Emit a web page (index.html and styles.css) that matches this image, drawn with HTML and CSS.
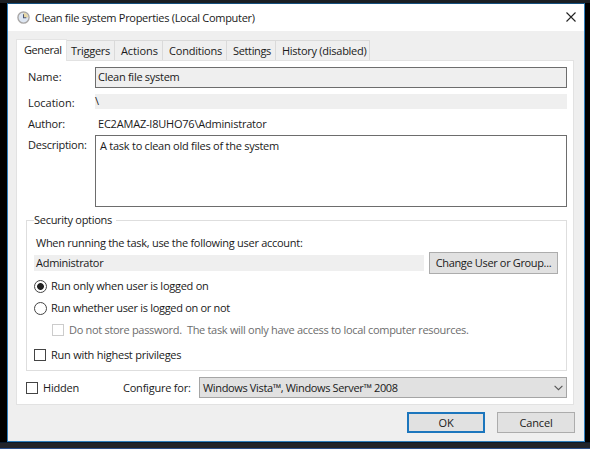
FILE: index.html
```html
<!DOCTYPE html>
<html lang="en">
<head>
<meta charset="utf-8">
<title>Clean file system Properties (Local Computer)</title>
<link rel="stylesheet" href="styles.css">
</head>
<body>
<div class="desktop">
<main class="dialog">
  <header class="titlebar">
    <svg class="clock" viewBox="0 0 14 14"><circle cx="7" cy="7" r="6" fill="#dde6f2" stroke="#a9a7a6" stroke-width="1.5"/><path d="M7 7V2A5 5 0 0 1 12 7Z" fill="#e6d7a6"/><path d="M7 3.4V7.3H10" fill="none" stroke="#4c5672" stroke-width="1.1"/></svg>
    <h1 class="title">Clean file system Properties (Local Computer)</h1>
    <svg class="close" viewBox="0 0 10 10"><path d="M.5.5 9.5 9.5M9.5.5.5 9.5" fill="none" stroke="#222" stroke-width="1.1"/></svg>
  </header>
  <nav class="tabs">
    <span class="tab active">General</span>
    <span class="tab triggers">Triggers</span>
    <span class="tab actions">Actions</span>
    <span class="tab conditions">Conditions</span>
    <span class="tab settings">Settings</span>
    <span class="tab history">History (disabled)</span>
  </nav>
  <section class="panel">
    <div class="row name"><span class="label">Name:</span><div class="field input">Clean file system</div></div>
    <div class="row location"><span class="label">Location:</span><div class="field readonly">\</div></div>
    <div class="row author"><span class="label">Author:</span><div class="field plain">EC2AMAZ-I8UHO76\Administrator</div></div>
    <div class="row description"><span class="label">Description:</span><div class="field textarea">A task to clean old files of the system</div></div>
    <div class="group">
      <div class="legend"><span>Security options</span></div>
      <p class="prompt">When running the task, use the following user account:</p>
      <div class="account"><div class="user">Administrator</div><div class="button change">Change User or Group...</div></div>
      <div class="option only"><i class="radio checked"></i><span>Run only when user is logged on</span></div>
      <div class="option whether"><i class="radio"></i><span>Run whether user is logged on or not</span></div>
      <div class="option store"><i class="check"></i><span>Do not store password.&nbsp; The task will only have access to local computer resources.</span></div>
      <div class="option highest"><i class="check"></i><span>Run with highest privileges</span></div>
    </div>
    <div class="bottom">
      <div class="option hide"><i class="check"></i><span>Hidden</span></div>
      <span class="configure">Configure for:</span>
      <div class="select"><span>Windows Vista™, Windows Server™ 2008</span><svg class="chevron" viewBox="0 0 9 6"><path d="M.6.8 4.5 4.7 8.4.8" fill="none" stroke="#555" stroke-width="1.1"/></svg></div>
    </div>
  </section>
  <footer class="buttons"><div class="button ok">OK</div><div class="button cancel">Cancel</div></footer>
</main>
<div class="taskbar"></div>
</div>
</body>
</html>
```
FILE: styles.css
```css
* { box-sizing: border-box; }
body { margin: 0; background: #000; color: #1a1a1a; font: 11px/14px "Open Sans", "Noto Sans", sans-serif; letter-spacing: -.275px; white-space: nowrap; }
h1, p { margin: 0; font: inherit; }
.desktop { width: 590px; height: 449px; border-top: 3px solid #1b1f24; overflow: hidden; }
.dialog { display: flex; flex-direction: column; width: 578px; height: 439px; margin-left: 7px; border: 1px solid #2f7fbd; border-top-color: #14507f; background: #efefef; }
.taskbar { height: 7px; background: #22242a; border-top: 1px solid #0b1a2c; border-bottom: 1px solid #2b4f8c; }

.titlebar { display: flex; align-items: center; height: 27px; background: #fff; padding: 0 8px 0 9px; }
.clock { width: 13px; height: 13px; }
.title { flex: 1; padding-left: 5px; letter-spacing: -.29px; }
.close { width: 10px; height: 10px; margin-top: -2px; }

.tabs { display: flex; align-items: flex-end; height: 29px; padding-left: 8px; }
.tab { height: 20px; padding: 3px 0 0 4px; border: 1px solid #dadada; border-width: 1px 1px 0 0; }
.tab.active { height: 22px; margin-bottom: -1px; width: 51px; padding-left: 7px; background: #fff; border-color: #e4e4e4; border-left: 1px solid #e4e4e4; letter-spacing: -.4px; z-index: 1; }
.triggers { width: 48px; }
.actions { width: 48px; padding-left: 6px; letter-spacing: -.1px; }
.conditions { width: 64px; padding-left: 6px; letter-spacing: -.2px; }
.settings { width: 49px; padding-left: 6px; letter-spacing: -.35px; }
.history { width: 94px; padding-left: 6px; letter-spacing: -.27px; }

.panel { width: 558px; height: 345px; margin-left: 8px; padding: 6px 6px 0 10px; background: #fff; border: 1px solid #e2e2e2; }
.row { display: flex; }
.label { width: 68px; flex: none; letter-spacing: -.02px; padding: 3px 0 0 1px; }
.field { flex: 1; }
.name { height: 21px; }
.input { border: 1px solid #6d6d6d; background: #efefef; padding: 2px 0 0 2px; }
.location { height: 15px; margin-top: 6px; }
.location .label { padding-top: 2px; }
.readonly { background: #efefef; }
.author { height: 20px; margin-top: 6px; }
.author .label { padding-top: 2px; letter-spacing: -.2px; }
.plain { padding: 2px 0 0 3px; letter-spacing: -.21px; }
.description { height: 72px; }
.description .label { letter-spacing: -.25px; }
.textarea { border: 1px solid #6d6d6d; padding: 3px 0 0 4px; letter-spacing: -.25px; }

.group { width: 541px; height: 151px; margin: 13px 0 0 -1px; border: 1px solid #dedede; padding-left: 7px; }
.legend { height: 14px; margin-top: -8px; }
.legend span { background: #fff; padding: 0 4px 0 0; }
.prompt { margin-top: 9px; padding-left: 2px; }
.account { display: flex; align-items: center; height: 22px; margin-top: 2px; }
.user { width: 390px; height: 16px; padding: 1px 0 0 2px; background: #efefef; }
.button { display: flex; align-items: center; justify-content: center; height: 22px; border: 1px solid #acacac; background: #e1e1e1; }
.change { width: 129px; margin-left: 5px; letter-spacing: -.35px; }
.option { display: flex; align-items: center; height: 14px; }
.radio { width: 13px; height: 13px; border: 1px solid #444; border-radius: 50%; margin-right: 4px; }
.radio.checked { background: radial-gradient(circle, #222 0 3px, #fff 3.8px); }
.check { width: 12px; height: 12px; border: 1px solid #444; margin-right: 5px; }
.only { margin-top: 5px; letter-spacing: -.26px; }
.whether { margin-top: 8px; letter-spacing: -.3px; }
.store { margin: 8px 0 0 18px; color: #6d6d6d; letter-spacing: -.305px; }
.store .check { border-color: #ccc; }
.highest { margin-top: 11px; letter-spacing: -.25px; }

.bottom { display: flex; align-items: center; height: 21px; margin: 6px 0 0 -1px; }
.hide { width: 97px; letter-spacing: -.2px; }
.configure { width: 76px; letter-spacing: -.22px; }
.select { display: flex; align-items: center; justify-content: space-between; width: 368px; height: 21px; border: 1px solid #a5a5a5; background: #e1e1e1; padding: 0 3px; letter-spacing: -.35px; }
.chevron { width: 9px; height: 6px; }

.buttons { display: flex; justify-content: flex-end; gap: 12px; padding: 7px 9px 0 0; }
.buttons .button { width: 78px; height: 21px; letter-spacing: -.15px; }
.buttons .ok { border: 2px solid #1c76bd; }
```
